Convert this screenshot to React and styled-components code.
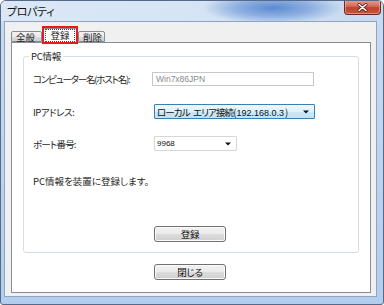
import React from 'react';
import styled, { createGlobalStyle } from 'styled-components';

const jp = `"Noto Sans CJK JP", "Noto Sans", sans-serif`;
const latin = `"Liberation Sans", "DejaVu Sans", sans-serif`;

const Global = createGlobalStyle`
  html, body { margin: 0; padding: 0; background: #ffffff; }
  body { width: 384px; height: 305px; overflow: hidden; }
  * { box-sizing: border-box; }
`;

const Window = styled.div`
  width: 384px;
  height: 305px;
  display: flex;
  flex-direction: column;
  border: 1px solid #56698a;
  border-radius: 6px 6px 3px 3px;
  overflow: hidden;
  font-family: ${jp};
  font-feature-settings: "palt";
  color: #1e1e1e;
  background: linear-gradient(180deg, #c9dbf1 0%, #b3cdec 100%);
`;

const TitleBar = styled.div`
  height: 20px;
  flex: none;
  display: flex;
  align-items: flex-start;
  justify-content: space-between;
  padding-left: 6px;
  background:
    radial-gradient(ellipse 70px 16px at 272px 7px, rgba(72, 124, 204, 0.85) 0%, rgba(92, 140, 212, 0.55) 55%, rgba(120, 160, 220, 0) 100%),
    linear-gradient(90deg, #dbe7f5 0%, #d6e4f4 50%, #c8daf0 100%);
`;

const Title = styled.span`
  font-size: 11px;
  line-height: 20px;
  color: #111;
  letter-spacing: -0.4px;
`;

const CloseButton = styled.div`
  width: 37px;
  height: 15px;
  margin-right: 2px;
  margin-top: -1px;
  display: flex;
  align-items: center;
  justify-content: center;
  border: 1px solid #6a2a22;
  border-top: none;
  border-radius: 0 0 4px 4px;
  background: linear-gradient(180deg, #e4a294 0%, #d26a58 45%, #c2402c 55%, #c75a3e 100%);
  box-shadow: inset 0 0 0 1px rgba(255, 210, 200, 0.45);
`;

const Frame = styled.div`
  flex: 1;
  display: flex;
  padding: 0 6px 7px 3px;
`;

const Client = styled.div`
  flex: 1;
  display: flex;
  flex-direction: column;
  background: #f0f0f0;
  border: 1px solid #8fa4c0;
  padding: 0 5px 3px 6px;
`;

const TabStrip = styled.div`
  height: 20px;
  flex: none;
  display: flex;
  align-items: flex-end;
  position: relative;
  z-index: 1;
`;

const Tab = styled.div`
  position: relative;
  height: ${(p) => (p.$active ? 15 : 11)}px;
  width: ${(p) => p.$w}px;
  margin-left: ${(p) => p.$ml || 0}px;
  margin-bottom: ${(p) => (p.$active ? -1 : 0)}px;
  display: flex;
  align-items: center;
  justify-content: ${(p) => (p.$active ? 'center' : 'flex-start')};
  padding-left: ${(p) => (p.$active ? 0 : 4)}px;
  font-size: 9.5px;
  border: 1px solid #898c95;
  border-bottom: ${(p) => (p.$active ? 'none' : '1px solid #898c95')};
  border-radius: 2px 2px 0 0;
  background: ${(p) => (p.$active ? '#ffffff' : 'linear-gradient(180deg, #f3f3f3 0%, #ebebeb 50%, #dddddd 51%, #cfcfcf 100%)')};
`;

const FocusLabel = styled.span`
  border: 1px dotted #444;
  padding: 0 4px;
  line-height: 11px;
  margin-top: -1px;
`;

const Highlight = styled.div`
  position: absolute;
  left: -2px;
  right: -2px;
  top: -3px;
  bottom: -1px;
  border: 2px solid #e31c1c;
  pointer-events: none;
`;

const TabPanel = styled.div`
  flex: 1;
  display: flex;
  flex-direction: column;
  background: #ffffff;
  border: 1px solid #898c95;
  padding: 13px 11px 0 11px;
`;

const GroupBox = styled.div`
  position: relative;
  height: 197px;
  border: 1px solid #d5dde5;
  border-radius: 3px;
  padding: 0 0 0 9px;
  display: flex;
  flex-direction: column;
`;

const Legend = styled.span`
  position: absolute;
  top: -7px;
  left: 5px;
  padding: 0 2px;
  background: #ffffff;
  font-size: 9.5px;
  line-height: 12px;
  letter-spacing: -0.3px;
`;

const Row = styled.div`
  display: flex;
  align-items: center;
  margin-top: ${(p) => p.$top}px;
  height: ${(p) => p.$h || 15}px;
`;

const Label = styled.span`
  width: 119px;
  flex: none;
  font-size: 9.5px;
  white-space: nowrap;
  letter-spacing: ${(p) => p.$ls || 0}px;
`;

const Note = styled.span`
  font-size: 9.5px;
  white-space: nowrap;
`;

const TextBox = styled.div`
  width: 162px;
  height: 14px;
  border: 1px solid #c5c9cf;
  background: #fff;
  display: flex;
  align-items: center;
  padding-left: 3px;
  font-family: ${latin};
  font-size: 8.5px;
  color: #8a8a8a;
`;

const Combo = styled.div`
  width: ${(p) => p.$w}px;
  height: 15px;
  margin-left: 2px;
  display: flex;
  align-items: center;
  justify-content: space-between;
  padding: 0 5px 0 2px;
  border: 1px solid ${(p) => (p.$hot ? '#3c7fb1' : '#d6d6d6')};
  border-radius: 1px;
  background: ${(p) =>
    p.$hot ? 'linear-gradient(180deg, #ecf7fd 0%, #dff1fc 50%, #cbe8f8 51%, #bfe2f5 100%)' : '#ffffff'};
  font-size: 9.5px;
  color: #111;
`;

const ComboText = styled.span`
  white-space: pre;
  letter-spacing: -0.9px;
  word-spacing: 2px;
`;

const Mono = styled.span`
  font-family: ${latin};
  font-size: ${(p) => p.$size || 8.5}px;
  letter-spacing: ${(p) => p.$ls || 0}px;
  word-spacing: 0;
  margin: 0 ${(p) => p.$mx || 0}px;
`;

const ButtonRow = styled.div`
  display: flex;
  justify-content: center;
  padding-right: ${(p) => p.$pr || 0}px;
  margin-top: ${(p) => p.$top}px;
`;

const Button = styled.div`
  width: 72px;
  height: 16px;
  display: flex;
  align-items: center;
  justify-content: center;
  border: 1px solid #707070;
  border-radius: 3px;
  background: linear-gradient(180deg, #f2f2f2 0%, #ebebeb 50%, #dddddd 51%, #cfcfcf 100%);
  box-shadow: inset 0 0 0 1px #fbfbfb;
  font-size: 9.5px;
  color: #111;
  letter-spacing: -0.3px;
`;

const Arrow = () => (
  <svg width="6" height="4" viewBox="0 0 6 4">
    <path d="M0 0.5 H6 L3 3.5 Z" fill="#111" />
  </svg>
);

const CloseX = () => (
  <svg width="11" height="9" viewBox="0 0 11 9">
    <path d="M2 1.5 L9 7.5 M9 1.5 L2 7.5" stroke="#5a2018" strokeWidth="3" strokeLinecap="round" />
    <path d="M2 1.5 L9 7.5 M9 1.5 L2 7.5" stroke="#ffffff" strokeWidth="1.6" strokeLinecap="round" />
  </svg>
);

export default function App() {
  return (
    <>
      <Global />
      <Window>
        <TitleBar>
          <Title>プロパティ</Title>
          <CloseButton>
            <CloseX />
          </CloseButton>
        </TitleBar>
        <Frame>
          <Client>
            <TabStrip>
              <Tab $w={31}>全般</Tab>
              <Tab $w={34} $ml={1} $active>
                <FocusLabel>登録</FocusLabel>
                <Highlight />
              </Tab>
              <Tab $w={27} $ml={1}>削除</Tab>
            </TabStrip>
            <TabPanel>
              <GroupBox>
                <Legend>PC情報</Legend>
                <Row $top={15} $h={14}>
                  <Label $ls={-1.2}>コンピューター名(ホスト名):</Label>
                  <TextBox>Win7x86JPN</TextBox>
                </Row>
                <Row $top={18}>
                  <Label $ls={-0.5}>IPアドレス:</Label>
                  <Combo $w={161} $hot>
                    <ComboText>
                      ローカル エリア接続(<Mono $size={9} $ls={0} $mx={1}>192.168.0.3</Mono>)
                    </ComboText>
                    <Arrow />
                  </Combo>
                </Row>
                <Row $top={17}>
                  <Label $ls={-0.8}>ポート番号:</Label>
                  <Combo $w={83}>
                    <Mono $size={8}>9968</Mono>
                    <Arrow />
                  </Combo>
                </Row>
                <Row $top={24} $h={12}>
                  <Note>PC情報を装置に登録します。</Note>
                </Row>
                <ButtonRow $top={39} $pr={11}>
                  <Button>登録</Button>
                </ButtonRow>
              </GroupBox>
              <ButtonRow $top={11} $pr={2}>
                <Button>閉じる</Button>
              </ButtonRow>
            </TabPanel>
          </Client>
        </Frame>
      </Window>
    </>
  );
}
